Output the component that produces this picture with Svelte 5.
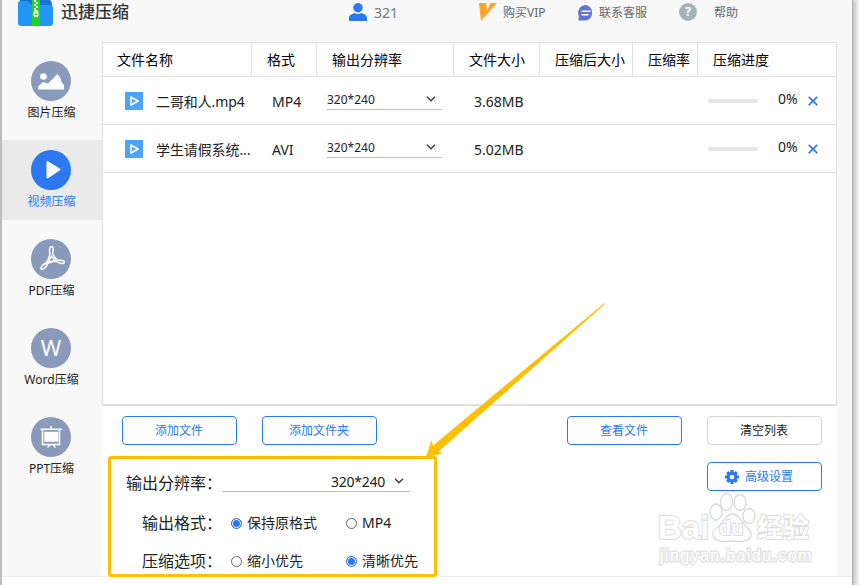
<script lang="ts">
  const tools = [
    { id: 'image', label: '图片压缩' },
    { id: 'video', label: '视频压缩' },
    { id: 'pdf', label: 'PDF压缩' },
    { id: 'word', label: 'Word压缩' },
    { id: 'ppt', label: 'PPT压缩' }
  ];

  const columns = ['文件名称', '格式', '输出分辨率', '文件大小', '压缩后大小', '压缩率', '压缩进度'];

  let active = $state('video');
  let files = $state([
    { name: '二哥和人.mp4', format: 'MP4', resolution: '320*240', size: '3.68MB', progress: 0 },
    { name: '学生请假系统...', format: 'AVI', resolution: '320*240', size: '5.02MB', progress: 0 }
  ]);
  let format = $state('keep');
  let quality = $state('clear');

  function removeFile(index: number) {
    files.splice(index, 1);
  }
</script>

{#snippet chevron()}
  <svg class="chevron" width="10" height="6" viewBox="0 0 10 6">
    <path d="M1 .8 5 4.8 9 .8" fill="none" stroke="#333" stroke-width="1.3" />
  </svg>
{/snippet}

<div class="window">
  <header class="topbar">
    <svg class="logo" width="35" height="26" viewBox="0 0 35 26">
      <path d="M2 0h30q2 1 2 6v4H2z" fill="#1976d2" />
      <path d="M0 3.500Q0 1 2.500 1H9q1.500 0 2.500 2t3 2H32q3 0 3 3v15q0 3-3 3H3q-3 0-3-3z" fill="#2196f3" />
      <path d="M14 0h8v26h-8z" fill="#1fd522" />
      <path d="M16 0h2v2h-2zM18 2h2v2h-2zM16 4h2v2h-2zM18 6h2v2h-2zM16 8h2v2h-2z" fill="#fff" />
      <path d="M18 10q2.500 0 2.500 4v1.500q0 1.500-2.500 1.500t-2.500-1.500V14q0-4 2.500-4z" fill="#fff" />
      <path d="M17 13.500h2V15h-2z" fill="#1fd522" />
    </svg>
    <h1>迅捷压缩</h1>

    <div class="user">
      <svg width="18" height="18" viewBox="0 0 18 18" fill="#2b78f0">
        <circle cx="9" cy="4.7" r="4.7" />
        <path d="M0 18v-3q0-3 3.2-4l2.3-.9Q9 12 12.500 10.100l2.300.9Q18 12 18 15v3z" />
      </svg>
      <span>321</span>
    </div>

    <div class="link vip">
      <svg width="18" height="18" viewBox="0 0 18 18">
        <path d="M0 0h7l1.200 7L11.500 0H18L2 18z" fill="#fba52c" />
      </svg>
      <span class="text">购买VIP</span>
    </div>
    <div class="link service">
      <svg width="16" height="16" viewBox="0 0 16 16">
        <path d="M8 0a8 8 0 0 1 0 15.500H1q-1 0-.6-1l.8-2.500A8 8 0 0 1 8 0z" fill="#6273d6" />
        <path d="M4 6.200h8M4 9.700h6" stroke="#fff" stroke-width="1.500" stroke-linecap="round" />
      </svg>
      <span class="text">联系客服</span>
    </div>
    <div class="link help">
      <span class="question">?</span>
      <span class="text">帮助</span>
    </div>
  </header>

  <div class="body">
    <nav class="sidebar">
      {#each tools as tool (tool.id)}
        <button class="tool" class:active={active === tool.id} onclick={() => (active = tool.id)}>
          <span class="tool-icon">
            {#if tool.id === 'image'}
              <svg width="40" height="40" viewBox="0 0 40 40" fill="#fff">
                <circle cx="12.500" cy="15.500" r="3.300" />
                <path d="M7 28.500v-3l5-4.500 5 1.500L26.500 13l3 4 1 4 2.500 3v4.500z" />
              </svg>
            {:else if tool.id === 'video'}
              <svg width="40" height="40" viewBox="0 0 40 40">
                <path d="M16.500 12 28.500 19.500 16.500 27.500z" fill="#fff" stroke="#fff" stroke-width="2" stroke-linejoin="round" />
              </svg>
            {:else if tool.id === 'pdf'}
              <svg width="40" height="40" viewBox="0 0 40 40" fill="none" stroke="#fff" stroke-width="1.500" stroke-linejoin="round">
                <path d="M19 8.500q2-2 3 0 .6 2-.5 6 1.500 4 5 6.500 4 0 6.300 1 1.500 2-1 2.500-3 .3-6-2.200-5 .2-9 2-2 5-5 6-2 .3-1.800-1.600 1-2.700 5.300-4.700 2.600-4 3.700-9-1-4 0-6.500z" />
                <path d="M20.300 17 17.500 23l7-1.300z" />
              </svg>
            {:else if tool.id === 'word'}
              W
            {:else}
              <svg width="40" height="40" viewBox="0 0 40 40" fill="none" stroke="#fff" stroke-width="1.500">
                <path d="M9.500 12.300h21.500M20 9v3M11.500 12v15.500h17V12M19 28l-2.500 2.500M22 28l2.500 2.500" />
                <path d="M14 15.500h12.500v8.500H14z" fill="#fff" />
              </svg>
            {/if}
          </span>
          <span class="tool-label">{tool.label}</span>
        </button>
      {/each}
    </nav>

    <main>
      <section class="table">
        <div class="row head">
          {#each columns as column}
            <div class="cell">{column}</div>
          {/each}
        </div>
        {#each files as file, i}
          <div class="row">
            <div class="name">
              <svg width="18" height="18" viewBox="0 0 18 18">
                <path d="M0 0h18v18H0z" fill="#4ba3fc" />
                <path d="M6 5v8l7-4z" fill="none" stroke="#fff" stroke-width="1.700" stroke-linejoin="round" />
              </svg>
              <span>{file.name}</span>
            </div>
            <div class="format">{file.format}</div>
            <div class="resolution">
              <div class="select">{file.resolution}{@render chevron()}</div>
            </div>
            <div class="size">{file.size}</div>
            <div></div>
            <div></div>
            <div class="progress">
              <span class="track"><span class="fill" style="width: {file.progress}%"></span></span>
              <span class="percent">{file.progress}%</span>
              <button class="remove" aria-label="删除" onclick={() => removeFile(i)}>
                <svg width="10" height="10" viewBox="0 0 10 10">
                  <path d="M.8.800 9.200 9.200M9.200.800.800 9.200" stroke="#2b78f0" stroke-width="1.700" />
                </svg>
              </button>
            </div>
          </div>
        {/each}
      </section>

      <section class="controls">
        <div class="buttons">
          <button class="btn">添加文件</button>
          <button class="btn">添加文件夹</button>
          <button class="btn right">查看文件</button>
          <button class="btn plain">清空列表</button>
        </div>
        <div class="lower">
          <div class="settings">
            <div class="field">
              <span class="label">输出分辨率：</span>
              <div class="select wide">320*240{@render chevron()}</div>
            </div>
            <div class="field">
              <span class="label">输出格式：</span>
              <label><input type="radio" value="keep" bind:group={format} /><span>保持原格式</span></label>
              <label><input type="radio" value="mp4" bind:group={format} /><span>MP4</span></label>
            </div>
            <div class="field last">
              <span class="label">压缩选项：</span>
              <label><input type="radio" value="small" bind:group={quality} /><span>缩小优先</span></label>
              <label><input type="radio" value="clear" bind:group={quality} /><span>清晰优先</span></label>
            </div>
          </div>
          <button class="btn advanced">
            <svg width="14" height="14" viewBox="0 0 14 14">
              <g stroke="#2b78f0" stroke-width="3.200">
                <path d="M7 0v14M0 7h14M2.200 2.200l9.600 9.600M11.800 2.200 2.200 11.800" />
              </g>
              <circle cx="7" cy="7" r="5.300" fill="#2b78f0" />
              <circle cx="7" cy="7" r="2.300" fill="#fff" />
            </svg>
            <span class="text">高级设置</span>
          </button>
        </div>
      </section>
    </main>
  </div>

  <!-- callout arrow pointing at the output settings -->
  <svg class="arrow" width="182" height="156" viewBox="0 0 182 156">
    <path d="M3 155 8.500 138 10 143.500 181.500 1 182 2 15.500 149.500 20 151.500z" fill="#ffbf00" />
  </svg>

  <div class="watermark">
    <svg class="paw" width="50" height="54" viewBox="0 0 50 54" fill="#fff" stroke="#d9d9d9" stroke-width="1.300">
      <ellipse cx="8" cy="20" rx="6" ry="8" />
      <ellipse cx="18.500" cy="10" rx="6" ry="8.500" />
      <ellipse cx="32" cy="10.500" rx="6" ry="8" />
      <ellipse cx="41" cy="24" rx="6" ry="7.500" />
      <path d="M24 22c6 0 8 5 12 10 5 5 8 8 7 12-2 6-10 6-19 5-9 1-17 1-19-5-1-5 3-8 8-12 4-5 6-10 11-10z" />
    </svg>
    <span class="mark bai">Bai</span>
    <span class="mark du">du</span>
    <span class="mark jy">经验</span>
    <span class="mark url">jingyan.baidu.com</span>
  </div>
</div>

<style>
  :global(body) {
    background: #fff;
    overflow: hidden;
  }

  .window {
    position: relative;
    box-sizing: border-box;
    width: 853px;
    height: 585px;
    border-left: 2px solid #bdbdbd;
    border-right: 1px solid #b0b0b0;
    box-shadow: 0 0 7px 2px #aaa;
    background: #fff;
    color: #222;
    font-family: 'Noto Sans', 'Noto Sans CJK SC', sans-serif;
    font-size: 14px;
  }

  button {
    padding: 0;
    border: none;
    background: none;
    color: inherit;
    font: inherit;
    cursor: pointer;
  }

  svg {
    display: block;
    flex: none;
  }

  .topbar {
    display: flex;
    box-sizing: border-box;
    height: 42px;
    background: #f8f8f8;
    color: #666;
    white-space: nowrap;
  }

  .logo {
    margin-left: 16px;
  }

  h1 {
    width: 288px;
    margin: 0 0 0 8px;
    color: #333;
    font-size: 17px;
    font-weight: 500;
    line-height: 24px;
  }

  .user,
  .link {
    display: flex;
    align-items: center;
    height: 25px;
  }

  .user {
    width: 130px;
    gap: 7px;
    color: #777;
  }

  .user svg,
  .vip svg {
    margin-top: -1px;
  }

  .link {
    font-size: 12px;
  }

  .text {
    padding-bottom: 2px;
  }

  .vip {
    width: 99px;
    gap: 6px;
  }

  .service {
    width: 101px;
    gap: 5px;
  }

  .help {
    gap: 17px;
  }

  .question {
    width: 18px;
    height: 18px;
    margin-top: -1px;
    border-radius: 50%;
    background: #a5b2b8;
    color: #fff;
    font-weight: 700;
    line-height: 18px;
    text-align: center;
  }

  .body {
    display: flex;
    box-sizing: border-box;
    height: 535px;
    border-bottom: 1px solid #ebebeb;
    background: #f8f8f8;
  }

  .sidebar {
    display: flex;
    flex-direction: column;
    gap: 9px;
    width: 100px;
    padding-top: 9px;
  }

  .tool {
    display: flex;
    flex-direction: column;
    align-items: center;
    box-sizing: border-box;
    height: 80px;
    padding: 10px 2px 0 0;
    font-size: 12px;
  }

  .tool.active {
    background: #eaeaea;
    color: #2b78f0;
  }

  .tool-icon {
    width: 40px;
    height: 40px;
    border-radius: 50%;
    background: #8a9abb;
    color: #fff;
    font-size: 22px;
    line-height: 38px;
  }

  .active .tool-icon {
    background: #2b78f0;
  }

  .tool-label {
    margin: 4px 0 0 1px;
    line-height: 16px;
    white-space: nowrap;
  }

  main {
    width: 735px;
    background: #fff;
  }

  .table {
    box-sizing: border-box;
    height: 364px;
    border: 1px solid #e0e0e0;
    border-bottom-width: 2px;
  }

  .row {
    display: grid;
    grid-template-columns: 149px 65px 137px 86px 93px 65px 138px;
    align-items: center;
    box-sizing: border-box;
    height: 48px;
    border-bottom: 1px solid #e0e0e0;
    white-space: nowrap;
  }

  .head {
    height: 34px;
    color: #000;
  }

  .cell {
    box-sizing: border-box;
    height: 33px;
    padding-left: 15px;
    border-right: 1px solid #e0e0e0;
    line-height: 33px;
  }

  .cell:first-child {
    padding-left: 14px;
  }

  .cell:last-child {
    border-right: none;
  }

  .name {
    display: flex;
    align-items: center;
    gap: 13px;
    padding-left: 22px;
    letter-spacing: -0.1px;
  }

  .format,
  .size {
    padding: 2px 0 0 20px;
  }

  .select {
    display: flex;
    align-items: center;
    justify-content: space-between;
    box-sizing: border-box;
    width: 115px;
    height: 20px;
    padding-right: 6px;
    border-bottom: 1px solid #bfbfbf;
    font-size: 12px;
  }

  .resolution {
    padding: 0 0 2px 10px;
  }

  .progress {
    display: flex;
    align-items: center;
    padding-left: 10px;
  }

  .track {
    width: 50px;
    height: 4px;
    border-radius: 2px;
    background: #e4e4e4;
  }

  .fill {
    display: block;
    height: 100%;
    border-radius: 2px;
    background: #2b78f0;
  }

  .percent {
    width: 30px;
    padding: 0 0 4px 20px;
  }

  .buttons {
    display: flex;
    gap: 25px;
    padding: 10px 15px 0 20px;
  }

  .btn {
    box-sizing: border-box;
    width: 115px;
    height: 29px;
    padding: 0 1px 1px 0;
    border: 1px solid #2b78f0;
    border-radius: 4px;
    background: #fff;
    color: #2b78f0;
    font-size: 12px;
  }

  .right {
    margin-left: auto;
  }

  .plain {
    border-color: #d5d5d5;
    color: #222;
  }

  .lower {
    display: flex;
    justify-content: space-between;
    align-items: flex-start;
    padding: 11px 15px 0 6px;
  }

  .advanced {
    display: flex;
    align-items: center;
    justify-content: center;
    gap: 6px;
    margin-top: 6px;
    padding: 0 11px 0 0;
  }

  .settings {
    box-sizing: border-box;
    width: 329px;
    height: 121px;
    padding-top: 12px;
    border: 3px solid #ffbf00;
    border-radius: 3px;
    background: #fff;
  }

  .field {
    display: flex;
    align-items: center;
    height: 24px;
    margin-bottom: 16px;
    white-space: nowrap;
  }

  .field.last {
    margin-top: -2px;
  }

  .label {
    width: 111px;
    padding-bottom: 2px;
    font-size: 16px;
    text-align: right;
  }

  .wide {
    justify-content: flex-end;
    gap: 9px;
    width: 188px;
    margin-bottom: 3px;
    font-size: 14px;
    letter-spacing: -0.25px;
  }

  .settings label {
    display: flex;
    align-items: center;
    width: 115px;
  }

  .settings label span {
    padding-bottom: 2px;
  }

  .field label:last-child {
    width: auto;
  }

  input {
    box-sizing: border-box;
    width: 11px;
    height: 11px;
    margin: 0 5px 0 9px;
    border: 1px solid #666;
    border-radius: 50%;
    background: #fff;
    appearance: none;
  }

  input:checked {
    border-color: #4a6fa8;
    background: #2b78f0;
    box-shadow: inset 0 0 0 1px #fff;
  }

  .arrow {
    position: absolute;
    top: 302px;
    left: 421px;
  }

  .watermark {
    position: absolute;
    top: 491px;
    left: 656px;
    width: 156px;
    height: 76px;
    pointer-events: none;
  }

  .paw {
    position: absolute;
    top: 1px;
    left: 50px;
  }

  .mark {
    position: absolute;
    color: #fff;
    font-weight: 700;
    line-height: 1;
    white-space: nowrap;
    -webkit-text-stroke: 2px #dcdcdc;
    paint-order: stroke fill;
  }

  .bai {
    top: 20px;
    left: 0;
    font-family: 'Liberation Sans', sans-serif;
    font-size: 33px;
  }

  .du {
    top: 27px;
    left: 61px;
    font-family: 'Liberation Sans', sans-serif;
    font-size: 20px;
  }

  .jy {
    top: 23px;
    left: 99px;
    font-size: 26px;
  }

  .url {
    top: 57px;
    left: 2px;
    font-family: 'Liberation Sans', sans-serif;
    font-size: 16px;
    font-weight: 400;
    letter-spacing: 1.4px;
    -webkit-text-stroke-width: 3px;
    -webkit-text-stroke-color: #e4e4e4;
  }
</style>
